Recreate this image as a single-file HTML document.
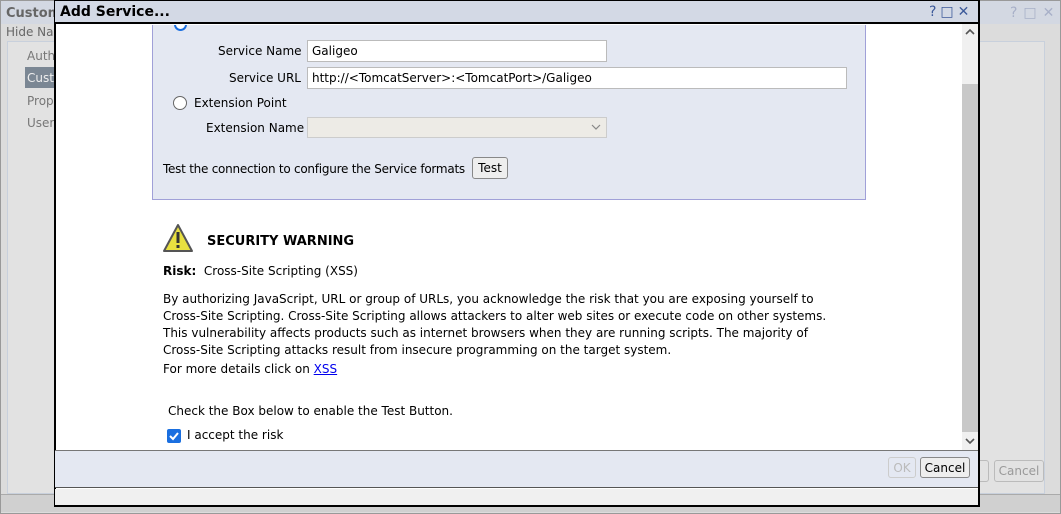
<!DOCTYPE html>
<html><head><style>
*{box-sizing:border-box;margin:0;padding:0}
body{width:1061px;height:514px;overflow:hidden;background:#d8d8d8;font-family:"DejaVu Sans","Liberation Sans",sans-serif;font-size:12px;color:#000;position:relative}
.abs{position:absolute}
</style></head><body>
<!-- underlying window -->
<div class="abs" style="left:0;top:0;width:1061px;height:514px;background:#dcdcdc;border:1px solid #999"></div>
<div class="abs" style="left:1px;top:1px;width:1059px;height:23px;background:#d3d8e2;"></div>
<div class="abs" style="left:6px;top:6px;font-weight:bold;color:#666;font-size:13px">Custom</div>
<div class="abs" style="left:1010px;top:5px;color:#a8b0c8;font-size:14px;letter-spacing:6px">?□✕</div>
<div class="abs" style="left:6px;top:25px;color:#666">Hide Nav</div>
<div class="abs" style="left:7px;top:41px;width:1038px;height:453px;background:#e2e2e2;border:1px solid #c8d0dc"></div>
<div class="abs" style="left:27px;top:49px;color:#777">Auth</div>
<div class="abs" style="left:25px;top:67px;width:30px;height:21px;background:#7b8794"></div>
<div class="abs" style="left:27px;top:71px;color:#eee">Cust</div>
<div class="abs" style="left:27px;top:94px;color:#777">Prop</div>
<div class="abs" style="left:27px;top:116px;color:#777">User</div>
<div class="abs" style="left:1px;top:494px;width:1059px;height:18px;background:#d0d0d0;border-top:1px solid #aaa"></div>
<div class="abs" style="left:965px;top:460px;width:24px;height:22px;border:1px solid #bbb;border-radius:3px;color:#999;padding:3px 0 0 2px">e</div>
<div class="abs" style="left:994px;top:460px;width:50px;height:22px;border:1px solid #bbb;border-radius:3px;color:#999;text-align:center;padding-top:3px">Cancel</div>

<!-- dialog -->
<div class="abs" style="left:54px;top:0;width:926px;height:507px;background:#fff;border:2px solid #000;border-top:1px solid #000"></div>
<div class="abs" style="left:55px;top:1px;width:923px;height:23px;background:#d3d9e5;border-bottom:2px solid #000"></div>
<div class="abs" style="left:60px;top:4px;font-weight:bold;font-size:14px">Add Service...</div>
<div class="abs" style="left:929px;top:4px;color:#3d5a9a;font-size:14px;letter-spacing:4px">?□✕</div>

<!-- scrollbar -->
<div class="abs" style="left:962px;top:24px;width:16px;height:426px;background:#f0f0f0"></div>
<div class="abs" style="left:962px;top:84px;width:16px;height:348px;background:#c8c8c8"></div>
<svg class="abs" style="left:965px;top:28px" width="10" height="8"><path d="M1 6 L5 2 L9 6" fill="none" stroke="#555" stroke-width="1.6"/></svg>
<svg class="abs" style="left:965px;top:437px" width="10" height="8"><path d="M1 2 L5 6 L9 2" fill="none" stroke="#555" stroke-width="1.6"/></svg>

<!-- panel -->
<div class="abs" style="left:152px;top:25px;width:714px;height:175px;background:#e4e8f2;border:1px solid #a0a0d8;border-top:none"></div>
<div class="abs" style="left:174px;top:25px;width:13px;height:6px;overflow:hidden"><div style="width:13px;height:13px;margin-top:-7px;border-radius:50%;border:2px solid #1a6fe0;background:#fff"></div></div>
<div class="abs" style="left:218px;top:44px">Service Name</div>
<div class="abs" style="left:307px;top:40px;width:300px;height:22px;background:#fff;border:1px solid #bbb;padding:3px 4px">Galigeo</div>
<div class="abs" style="left:229px;top:71px">Service URL</div>
<div class="abs" style="left:307px;top:67px;width:540px;height:22px;background:#fff;border:1px solid #bbb;padding:3px 4px">http://&lt;TomcatServer&gt;:&lt;TomcatPort&gt;/Galigeo</div>
<div class="abs" style="left:173px;top:96px;width:14px;height:14px;border-radius:50%;border:1px solid #666;background:#fff"></div>
<div class="abs" style="left:194px;top:96px">Extension Point</div>
<div class="abs" style="left:206px;top:121px">Extension Name</div>
<div class="abs" style="left:307px;top:117px;width:300px;height:21px;background:#edebe6;border:1px solid #ccc"></div>
<svg class="abs" style="left:591px;top:124px" width="10" height="7"><path d="M1 1 L5 5 L9 1" fill="none" stroke="#888" stroke-width="1.2"/></svg>
<div class="abs" style="left:163px;top:162px;letter-spacing:-0.25px">Test the connection to configure the Service formats</div>
<div class="abs" style="left:472px;top:157px;width:36px;height:22px;border:1px solid #888;border-radius:3px;background:#eee;text-align:center;padding-top:3px">Test</div>

<!-- warning -->
<svg class="abs" style="left:162px;top:223px" width="32" height="30" viewBox="0 0 32 30"><path d="M16 2 L30 28 L2 28 Z" fill="#e8e040" stroke="#555" stroke-width="2" stroke-linejoin="round"/><rect x="14.5" y="9" width="3" height="11" fill="#333"/><rect x="14.5" y="22" width="3" height="3" fill="#333"/></svg>
<div class="abs" style="left:207px;top:234px;font-weight:bold;font-size:13px">SECURITY WARNING</div>
<div class="abs" style="left:163px;top:264px"><b>Risk:</b>&nbsp; Cross-Site Scripting (XSS)</div>
<div class="abs" style="left:163px;top:291px;line-height:17px;width:700px">By authorizing JavaScript, URL or group of URLs, you acknowledge the risk that you are exposing yourself to<br>Cross-Site Scripting. Cross-Site Scripting allows attackers to alter web sites or execute code on other systems.<br>This vulnerability affects products such as internet browsers when they are running scripts. The majority of<br>Cross-Site Scripting attacks result from insecure programming on the target system.</div>
<div class="abs" style="left:163px;top:362px">For more details click on <span style="color:#00e;text-decoration:underline">XSS</span></div>
<div class="abs" style="left:168px;top:404px">Check the Box below to enable the Test Button.</div>
<div class="abs" style="left:167px;top:429px;width:14px;height:14px;background:#1a6fe0;border-radius:2px"><svg width="14" height="14"><path d="M3 7 L6 10 L11 4" fill="none" stroke="#fff" stroke-width="2"/></svg></div>
<div class="abs" style="left:187px;top:428px">I accept the risk</div>

<!-- footer -->
<div class="abs" style="left:55px;top:450px;width:923px;height:38px;background:#e4e8f2;border-top:1px solid #777;border-bottom:1px solid #555"></div>
<div class="abs" style="left:888px;top:457px;width:28px;height:21px;border:1px solid #ccc;border-radius:3px;color:#bbb;text-align:center;padding-top:3px">OK</div>
<div class="abs" style="left:920px;top:457px;width:50px;height:21px;border:1px solid #888;border-radius:3px;background:#eee;text-align:center;padding-top:3px">Cancel</div>
<div class="abs" style="left:55px;top:489px;width:923px;height:16px;background:#f0f0f0"></div>
</body></html>
